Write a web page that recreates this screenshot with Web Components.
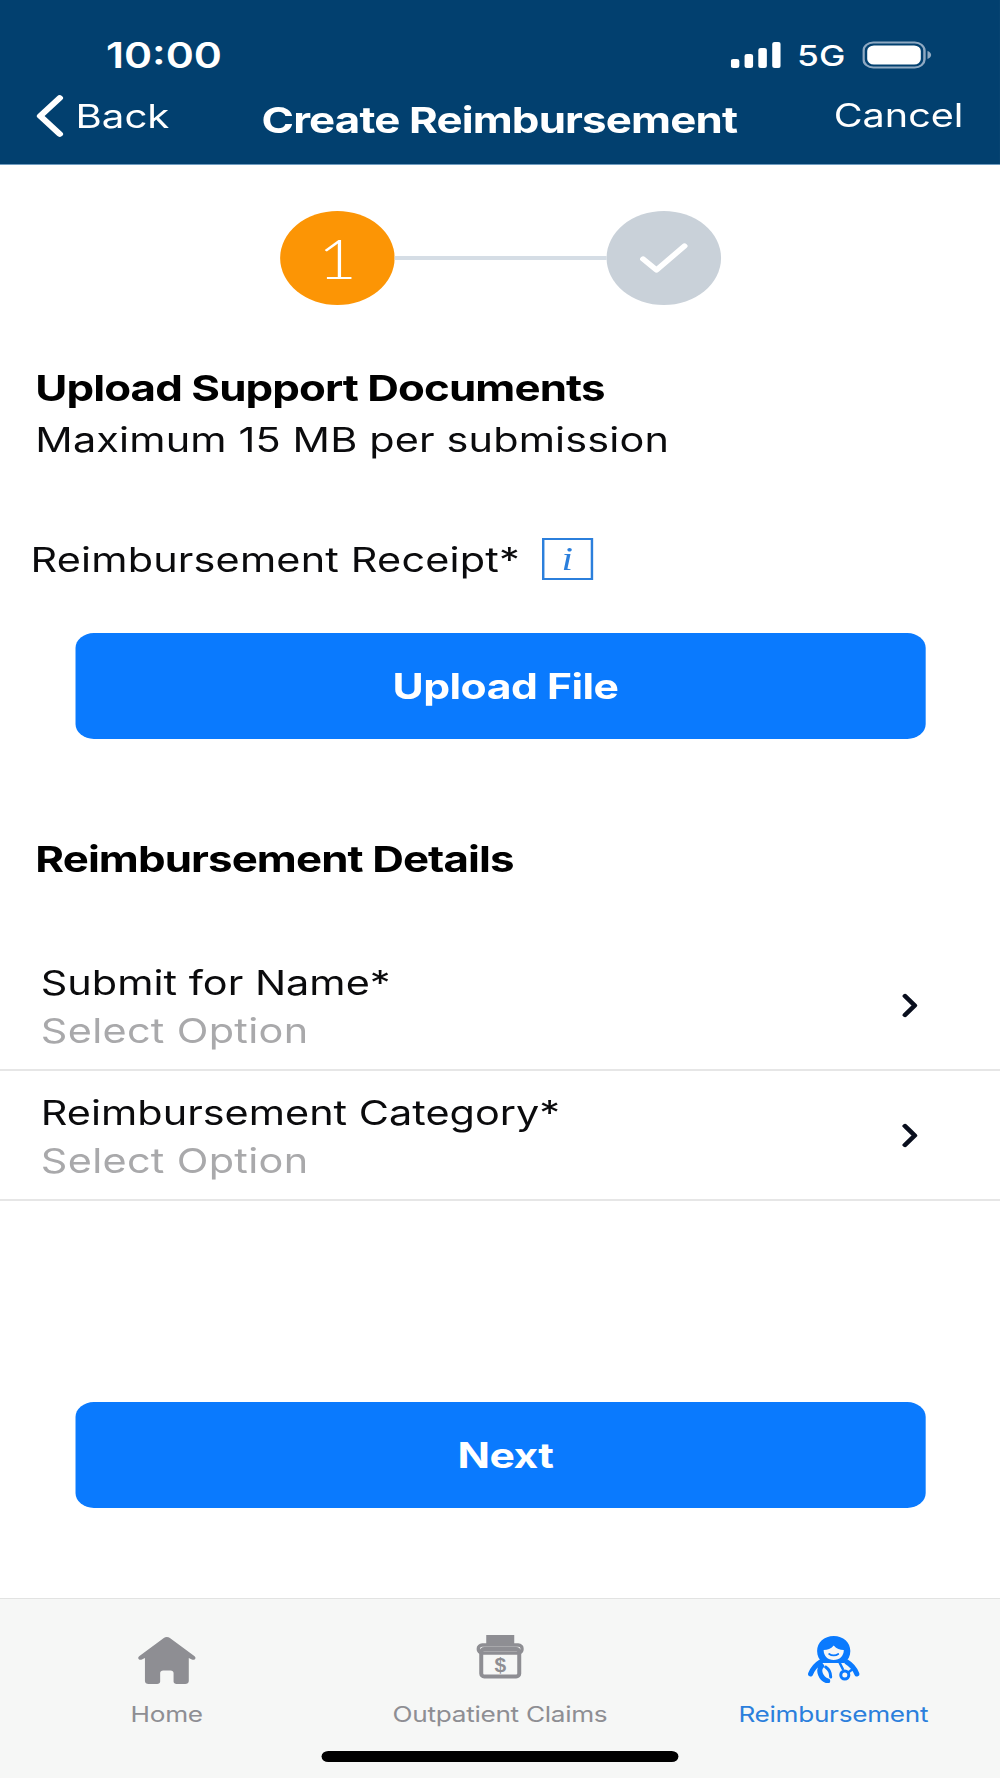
<!DOCTYPE html>
<html>
<head>
<meta charset="utf-8">
<title>Create Reimbursement</title>
<style>
  html, body { margin: 0; padding: 0; background: #fff; overflow: hidden; }
  body { font-family: Inter, "Liberation Sans", sans-serif; color: #0b0b0d; }
</style>
</head>
<body>
<app-screen>
  <nav-header title="Create Reimbursement"></nav-header>
  <step-indicator></step-indicator>
  <section-title style="--top:61px">Upload Support Documents</section-title>
  <p-line>Maximum 15 MB per submission</p-line>
  <receipt-label>Reimbursement Receipt*</receipt-label>
  <action-button style="--top:53px">Upload File</action-button>
  <section-title style="--top:98px">Reimbursement Details</section-title>
  <select-row style="--top:60px" label="Submit for Name*"></select-row>
  <select-row label="Reimbursement Category*"></select-row>
  <action-button style="--top:201px">Next</action-button>
  <tab-bar></tab-bar>
</app-screen>

<script>
// the reference is a phone screen stretched wider than tall, so the whole
// screen is laid out at 821px and scaled on x only
class AppScreen extends HTMLElement {
  connectedCallback() {
    this.attachShadow({ mode: 'open' });
    this.shadowRoot.innerHTML = `
      <style>
        :host {
          display: flex;
          flex-direction: column;
          width: 821px;
          height: 1778px;
          transform: scaleX(1.218);
          transform-origin: 0 0;
          overflow: hidden;
        }
      </style>
      <slot></slot>
    `;
  }
}

class NavHeader extends HTMLElement {
  connectedCallback() {
    this.attachShadow({ mode: 'open' });
    this.shadowRoot.innerHTML = `
      <style>
        :host {
          display: block;
          height: 164px;
          flex: none;
          background: #02406f;
          border-bottom: 1px solid #6f9cc0;
          color: #fff;
        }
        .status {
          display: flex;
          justify-content: space-between;
          align-items: center;
          height: 40px;
          padding: 35px 56px 0 87px;
        }
        .time { font-size: 35px; font-weight: 600; }
        .signal { display: flex; align-items: center; }
        .net { font-size: 29px; font-weight: 500; margin: 0 14px 0 13px; }
        .nav {
          display: grid;
          grid-template-columns: 1fr auto 1fr;
          align-items: center;
          height: 48px;
          padding: 14px 30px 0 29px;
        }
        .back { display: flex; align-items: center; gap: 9px; font-size: 33px; }
        .title { font-size: 36px; font-weight: 700; letter-spacing: -0.7px; padding-top: 9px; }
        .cancel { font-size: 32.500px; text-align: right; }
      </style>
      <div class="status">
        <span class="time">10:00</span>
        <div class="signal">
          <svg width="41" height="26" viewBox="0 0 41 26" fill="#fff">
            <rect x="0" y="17" width="7" height="9" rx="2"/>
            <rect x="11.300" y="12" width="7" height="14" rx="2"/>
            <rect x="22.600" y="6" width="7" height="20" rx="2"/>
            <rect x="34" y="0" width="7" height="26" rx="2"/>
          </svg>
          <span class="net">5G</span>
          <svg width="57" height="28" viewBox="0 0 57 28">
            <rect x="1" y="1.500" width="50" height="25" rx="8" fill="none" stroke="#8fa9c2" stroke-width="2"/>
            <rect x="4" y="4.500" width="44" height="19" rx="5.500" fill="#fff"/>
            <path d="M53.500 10v8c1.500-.6 3-2.200 3-4s-1.500-3.400-3-4z" fill="#8fa9c2"/>
          </svg>
        </div>
      </div>
      <div class="nav">
        <div class="back">
          <svg width="24" height="44" viewBox="0 0 24 44" fill="none" stroke="#fff" stroke-width="5.500" stroke-linecap="round" stroke-linejoin="round">
            <path d="M20 4 4 22l16 18"/>
          </svg>
          <span>Back</span>
        </div>
        <div class="title">${this.getAttribute('title')}</div>
        <div class="cancel">Cancel</div>
      </div>
    `;
  }
}

class StepIndicator extends HTMLElement {
  connectedCallback() {
    this.attachShadow({ mode: 'open' });
    this.shadowRoot.innerHTML = `
      <style>
        :host {
          display: flex;
          align-items: center;
          margin: 46px 0 0 230px;
          height: 94px;
          flex: none;
        }
        .dot {
          width: 94px;
          height: 94px;
          border-radius: 50%;
          display: flex;
          align-items: center;
          justify-content: center;
          flex: none;
        }
        .one { background: #fc9505; color: #fff; font: 300 55px Lato, "Liberation Sans", sans-serif; }
        .done { background: #c9d1d9; }
        .line { width: 174px; height: 4px; background: #d5dde5; }
      </style>
      <div class="dot one">1</div>
      <div class="line"></div>
      <div class="dot done">
        <svg width="40" height="32" viewBox="0 0 40 32" fill="none" stroke="#fff" stroke-width="5" stroke-linecap="round" stroke-linejoin="round">
          <path d="M3 17l11 11L37 4"/>
        </svg>
      </div>
    `;
  }
}

class SectionTitle extends HTMLElement {
  connectedCallback() {
    this.attachShadow({ mode: 'open' });
    this.shadowRoot.innerHTML = `
      <style>
        :host {
          display: block;
          flex: none;
          margin: var(--top, 0) 0 0 29px;
          font-size: 36px;
          line-height: 44px;
          font-weight: 700;
          letter-spacing: -0.75px;
          color: #000;
        }
      </style>
      <slot></slot>
    `;
  }
}

class PLine extends HTMLElement {
  connectedCallback() {
    this.attachShadow({ mode: 'open' });
    this.shadowRoot.innerHTML = `
      <style>
        :host {
          display: block;
          flex: none;
          margin: 8px 0 0 29px;
          font-size: 34px;
          letter-spacing: 0.12px;
          line-height: 44px;
        }
      </style>
      <slot></slot>
    `;
  }
}

class ReceiptLabel extends HTMLElement {
  connectedCallback() {
    this.attachShadow({ mode: 'open' });
    this.shadowRoot.innerHTML = `
      <style>
        :host {
          display: flex;
          align-items: center;
          flex: none;
          margin: 76px 0 0 25px;
          height: 42px;
          font-size: 34px;
          letter-spacing: 0.14px;
        }
        .info {
          margin-left: 18px;
          width: 38px;
          height: 38px;
          border: 2px solid #2b7fdc;
          display: flex;
          align-items: center;
          justify-content: center;
          color: #2b7fdc;
          font: italic 34px "Liberation Serif", serif;
        }
      </style>
      <span><slot></slot></span>
      <span class="info">i</span>
    `;
  }
}

class ActionButton extends HTMLElement {
  connectedCallback() {
    this.attachShadow({ mode: 'open' });
    this.shadowRoot.innerHTML = `
      <style>
        :host {
          display: flex;
          align-items: center;
          justify-content: center;
          flex: none;
          margin: var(--top, 0) 61px 0 62px;
          padding-left: 8px;
          height: 106px;
          background: #0a7afe;
          border-radius: 15px;
          color: #fff;
          font-size: 35px;
          font-weight: 700;
          letter-spacing: -0.4px;
        }
      </style>
      <slot></slot>
    `;
  }
}

class SelectRow extends HTMLElement {
  connectedCallback() {
    this.attachShadow({ mode: 'open' });
    this.shadowRoot.innerHTML = `
      <style>
        :host {
          display: flex;
          align-items: center;
          justify-content: space-between;
          flex: none;
          margin-top: var(--top, 0);
          padding: 0 67px 0 33.500px;
          height: 130px;
          border-bottom: 2px solid #e6e6e6;
          box-sizing: border-box;
          font-size: 34px;
        }
        .text { display: flex; flex-direction: column; gap: 4px; line-height: 44px; padding-top: 4px; }
        .hint { color: #a9a9ab; letter-spacing: 0.25px; }
      </style>
      <div class="text">
        <span>${this.getAttribute('label')}</span>
        <span class="hint">Select Option</span>
      </div>
      <svg width="14" height="25" viewBox="0 0 14 25" fill="none" stroke="#0a0f1e" stroke-width="4.200" stroke-linecap="round" stroke-linejoin="round">
        <path d="M3 3l8 9.500-8 9.500"/>
      </svg>
    `;
  }
}

class TabBar extends HTMLElement {
  connectedCallback() {
    this.attachShadow({ mode: 'open' });
    this.shadowRoot.innerHTML = `
      <style>
        :host {
          display: block;
          position: relative;
          flex: none;
          margin-top: 90px;
          height: 180px;
          background: #f6f7f6;
          border-top: 1px solid #e2e3e2;
        }
        .tabs { display: grid; grid-template-columns: repeat(3, 1fr); }
        .tab {
          display: flex;
          flex-direction: column;
          align-items: center;
          padding-top: 36px;
          font-size: 21.500px;
          letter-spacing: -0.25px;
          color: #8e8e93;
          gap: 14px;
        }
        .icon { height: 52px; display: flex; align-items: flex-start; }
        .icon svg { display: block; }
        .tab.on { color: #2b7fdc; }
        /* home indicator sits over the bar */
        .indicator {
          position: absolute;
          left: 264px;
          right: 264px;
          bottom: 17px;
          height: 11px;
          border-radius: 6px;
          background: #000;
        }
      </style>
      <div class="tabs">
        <div class="tab">
          <div class="icon">
            <svg width="48" height="52" viewBox="0 0 48 52" fill="#8e8e93">
              <path d="M24 2c1 0 1.800.4 2.500 1L46.500 21c1 1 1.300 2 .7 3-.6.900-1.700 1-2.700.6L42 23v23c0 2-1.200 3-3 3h-7c-1.500 0-2.500-1-2.500-2.500V38c0-1.500-1-2.500-2.500-2.500h-6c-1.500 0-2.500 1-2.500 2.500v8.500c0 1.500-1 2.500-2.500 2.500H9c-1.800 0-3-1-3-3V23l-2.500 1.600c-1 .4-2.100.3-2.700-.6-.6-1-.3-2 .7-3L21.500 3c.7-.6 1.500-1 2.500-1z"/>
            </svg>
          </div>
          <span>Home</span>
        </div>
        <div class="tab">
          <div class="icon">
            <!-- drawn in full-size px, so the svg undoes the x stretch -->
            <svg width="38.600" height="44" viewBox="16 15 47 44" preserveAspectRatio="none">
              <rect x="26" y="15" width="28" height="11" fill="#8e8e93"/>
              <rect x="18" y="25" width="44" height="8" rx="4" fill="none" stroke="#8e8e93" stroke-width="3.500"/>
              <rect x="21" y="29" width="38" height="27.500" rx="3" fill="none" stroke="#8e8e93" stroke-width="4"/>
              <text x="40" y="52" text-anchor="middle" font-family="Liberation Sans" font-weight="700" font-size="21" fill="#8e8e93">$</text>
            </svg>
          </div>
          <span>Outpatient Claims</span>
        </div>
        <div class="tab on">
          <div class="icon">
            <svg width="43" height="48" viewBox="12 10 52 48" preserveAspectRatio="none" fill="none" stroke="#0a7afe" stroke-linecap="round">
              <path fill="#0a7afe" stroke="none" fill-rule="evenodd" d="M38 11c9.500 0 16.500 6.500 16.500 15 0 5-2 9-6 12H27.500c-4-3-6-7-6-12 0-8.500 7-15 16.500-15zm-10 14c0 6 4 10 10 10s10-4 10-10c-4 0-7-1-10-4.500C35 24 32 25 28 25z"/>
              <path stroke-width="1.800" d="M33.500 29c2.500 1.800 6.500 1.800 9 0"/>
              <path stroke-width="5" d="M25 37c-5 3-8 7-10 12M51 37c5 3 8 7 10 12"/>
              <path stroke-width="5" d="M26 41c-4 4-1 13 6 15"/>
              <path stroke-width="3" d="M30 42c3 2 5 5 5 10"/>
              <path stroke-width="2.500" d="M44 38l3 6"/>
              <circle cx="49" cy="50" r="4" stroke-width="3"/>
              <path stroke-width="2.500" d="M53 47l4-3"/>
            </svg>
          </div>
          <span>Reimbursement</span>
        </div>
      </div>
      <div class="indicator"></div>
    `;
  }
}

customElements.define('app-screen', AppScreen);
customElements.define('nav-header', NavHeader);
customElements.define('step-indicator', StepIndicator);
customElements.define('section-title', SectionTitle);
customElements.define('p-line', PLine);
customElements.define('receipt-label', ReceiptLabel);
customElements.define('action-button', ActionButton);
customElements.define('select-row', SelectRow);
customElements.define('tab-bar', TabBar);
</script>
</body>
</html>
